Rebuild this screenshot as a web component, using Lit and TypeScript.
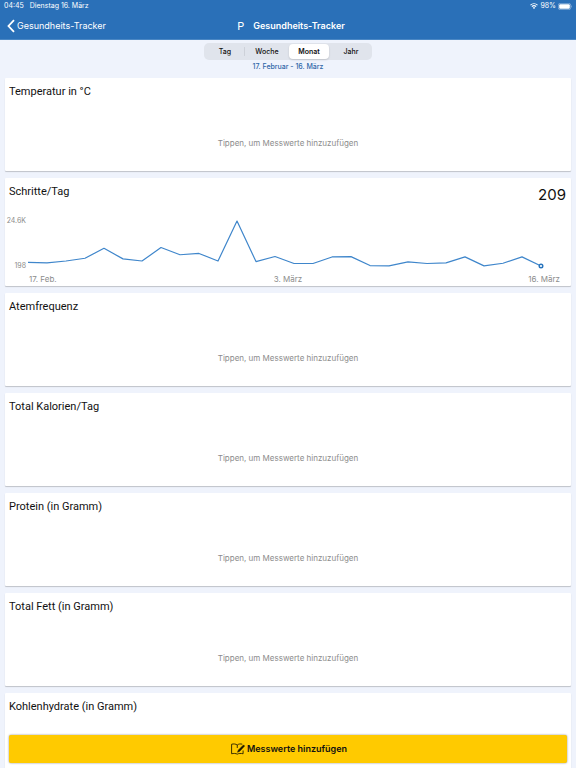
import { LitElement, html, svg, css, nothing } from "lit";
import { customElement, property, state } from "lit/decorators.js";

interface Metric {
  title: string;
  latest?: string;
  values?: number[];
  low?: string;
  high?: string;
  dates?: string[];
  pending?: boolean;
}

const METRICS: Metric[] = [
  { title: "Temperatur in °C" },
  {
    title: "Schritte/Tag",
    latest: "209",
    low: "198",
    high: "24.6K",
    dates: ["17. Feb.", "3. März", "16. März"],
    values: [
      2200, 1900, 2900, 4400, 9800, 4050, 2900, 10200, 6300, 7000, 2900, 24600, 2600, 5350,
      1550, 1550, 5100, 5300, 450, 250, 2400, 1550, 1900, 5150, 250, 1700, 5150, 209,
    ],
  },
  { title: "Atemfrequenz" },
  { title: "Total Kalorien/Tag" },
  { title: "Protein (in Gramm)" },
  { title: "Total Fett (in Gramm)" },
  { title: "Kohlenhydrate (in Gramm)", pending: true },
];

const RANGES = ["Tag", "Woche", "Monat", "Jahr"];

@customElement("line-chart")
export class LineChart extends LitElement {
  @property({ attribute: false }) values: number[] = [];

  static styles = css`
    :host { display: block; height: 45px; }
    svg { display: block; width: 100%; height: 100%; overflow: visible; }
    .line { fill: none; stroke: #3f86cb; stroke-width: 1.2; vector-effect: non-scaling-stroke; stroke-linejoin: round; }
    .dot { fill: #fff; stroke: #2874bd; stroke-width: 1.4; }
  `;

  render() {
    const min = 198;
    const max = Math.max(...this.values);
    const y = (v: number) => 100 - ((v - min) / (max - min)) * 100;
    const points = this.values
      .map((v, i) => `${(i / (this.values.length - 1)) * 100},${y(v)}`)
      .join(" ");
    const last = this.values[this.values.length - 1];
    return html`
      <svg role="img" aria-label="Verlauf">
        ${svg`
          <svg viewBox="0 0 100 100" preserveAspectRatio="none" width="100%" height="100%" overflow="visible">
            <polyline class="line" points=${points}></polyline>
          </svg>
          <circle class="dot" cx="100%" cy="${y(last)}%" r="1.8"></circle>
        `}
      </svg>
    `;
  }
}

@customElement("metric-card")
export class MetricCard extends LitElement {
  @property({ attribute: false }) metric!: Metric;

  static styles = css`
    :host {
      display: flex;
      flex-direction: column;
      flex: none;
      min-height: 93px;
      background: #fff;
      border-radius: 1px;
      box-shadow: 0 1px 1px rgba(0, 0, 0, 0.2);
    }
    header { display: flex; justify-content: space-between; height: 32px; padding: 6px 5px 0 4px; box-sizing: border-box; }
    h2 { margin: 0; font: 400 11px/16px Roboto, sans-serif; color: #111; }
    .latest { font-size: 15px; line-height: 22px; color: #111; }
    .empty {
      height: 61px;
      padding: 4px 0 0;
      border: 0;
      background: none;
      font: 400 8px/12px Inter, sans-serif;
      color: #8c8c8c;
    }
    .plot { display: grid; grid-template-columns: 20px 1fr; column-gap: 2px; padding: 11px 30px 0 1px; }
    .scale {
      display: flex;
      flex-direction: column;
      justify-content: space-between;
      margin: -4px 0;
      text-align: right;
      font-size: 7px;
      line-height: 8px;
      color: #8c8c8c;
    }
    .dates {
      display: grid;
      grid-template-columns: 1fr auto 1fr;
      padding: 8px 11px 2px;
      font-size: 8px;
      line-height: 10px;
      color: #8c8c8c;
    }
    .dates :first-child { padding-left: 13px; }
    .dates :last-child { text-align: right; }
  `;

  private renderBody(m: Metric) {
    if (m.pending) return nothing;
    if (!m.values) {
      return html`<button class="empty" type="button">Tippen, um Messwerte hinzuzufügen</button>`;
    }
    return html`
      <div class="plot">
        <div class="scale"><span>${m.high}</span><span>${m.low}</span></div>
        <line-chart .values=${m.values}></line-chart>
      </div>
      <div class="dates">${m.dates?.map((d) => html`<span>${d}</span>`)}</div>
    `;
  }

  render() {
    const m = this.metric;
    return html`
      <header>
        <h2>${m.title}</h2>
        ${m.latest ? html`<span class="latest">${m.latest}</span>` : nothing}
      </header>
      ${this.renderBody(m)}
    `;
  }
}

@customElement("app-root")
export class AppRoot extends LitElement {
  @state() private range = "Monat";

  static styles = css`
    :host {
      position: relative;
      display: flex;
      flex-direction: column;
      height: 100vh;
      overflow: hidden;
      background: #eff3fc;
      font-family: Inter, sans-serif;
    }
    .top { flex: none; background: #2a70b8; color: #fff; border-bottom: 1px solid #4a87c4; }
    .status { display: flex; align-items: center; height: 12px; padding: 0 4px; font-size: 7px; line-height: 12px; }
    .day { margin-left: 6px; flex: 1; }
    .wifi { width: 8px; height: 6px; margin-right: 2px; }
    .battery { width: 14px; height: 7px; margin-left: 2px; }
    .nav { display: grid; grid-template-columns: 1fr auto 1fr; align-items: center; height: 27px; padding: 0 7px; }
    .back { display: flex; align-items: center; gap: 2px; justify-self: start; color: #fff; text-decoration: none; font-size: 9px; line-height: 12px; }
    .back svg { width: 8px; height: 14px; }
    .heading { display: flex; align-items: center; gap: 9px; padding-left: 6px; }
    .initial { font-size: 11px; line-height: 12px; }
    h1 { margin: 0; font-size: 9px; line-height: 12px; font-weight: 600; }
    .filter { flex: none; display: flex; flex-direction: column; align-items: center; padding-top: 3px; }
    .segments {
      display: grid;
      grid-template-columns: repeat(4, 1fr);
      width: 168px;
      height: 17px;
      box-sizing: border-box;
      margin: 0;
      padding: 1px 0;
      border: 0;
      border-radius: 5px;
      background: #e0e4ec;
    }
    .segment {
      position: relative;
      display: grid;
      place-items: center;
      margin: 0 1px;
      border-radius: 4px;
      font-size: 7px;
      line-height: 15px;
      font-weight: 500;
      color: #111;
    }
    .segment input { position: absolute; inset: 0; margin: 0; opacity: 0; }
    .segment.divided { background: linear-gradient(#cdd1d9, #cdd1d9) right center / 1px 9px no-repeat; }
    .segment.selected { background: #fff; font-weight: 600; box-shadow: 0 1px 2px rgba(0, 0, 0, 0.15); }
    .period { margin: 0; padding: 1px 0 5px; font-size: 7px; line-height: 12px; font-weight: 500; color: #2f68a8; }
    main { flex: 1; min-height: 0; display: flex; flex-direction: column; gap: 7px; padding: 0 5px; overflow: hidden; }
    .add {
      position: absolute;
      left: 9px;
      right: 9px;
      bottom: 5px;
      height: 28px;
      display: flex;
      align-items: center;
      justify-content: center;
      gap: 2px;
      padding: 0 0 0 2px;
      border: 0;
      border-radius: 2px;
      background: #ffca00;
      box-shadow: 0 0 2px rgba(0, 0, 0, 0.5);
      color: #111;
      font: 600 9px/12px Inter, sans-serif;
    }
    .add svg { width: 14px; height: 12px; }
  `;

  render() {
    return html`
      <div class="top">
        <div class="status">
          <span>04:45</span><span class="day">Dienstag 16. März</span>
          <svg class="wifi" viewBox="0 0 16 12" fill="none" stroke="#fff" stroke-width="2.2" aria-hidden="true">
            <path d="M1 4.4C5 .6 11 .6 15 4.4M3.7 7.2c2.5-2.3 6.1-2.3 8.6 0" />
            <path d="M8 11.8 5.5 9.3c1.5-1.3 3.5-1.3 5 0z" fill="#fff" stroke="none" />
          </svg>
          <span>98%</span>
          <svg class="battery" viewBox="0 0 28 14" aria-hidden="true">
            <rect x=".7" y=".7" width="24.6" height="12.6" rx="3.5" fill="none" stroke="#9dbde0" stroke-width="1.3" />
            <rect x="2.4" y="2.4" width="21.2" height="9.2" rx="2" fill="#fff" />
            <path d="M26.5 4.7c1.6.8 1.6 3.8 0 4.6z" fill="#9dbde0" />
          </svg>
        </div>
        <nav class="nav">
          <a class="back" href="#">
            <svg viewBox="0 0 8 14" fill="none" stroke="#fff" stroke-width="1.8" aria-hidden="true">
              <path d="M7 1.2 1.5 7 7 12.8" />
            </svg>
            Gesundheits-Tracker
          </a>
          <div class="heading"><span class="initial">P</span><h1>Gesundheits-Tracker</h1></div>
        </nav>
      </div>
      <div class="filter">
        <fieldset class="segments" aria-label="Zeitraum">
          ${RANGES.map(
            (r, i) => html`
              <label class="segment ${r === this.range ? "selected" : i === 0 ? "divided" : ""}">
                <input type="radio" name="range" .checked=${r === this.range} @change=${() => (this.range = r)} />
                ${r}
              </label>
            `
          )}
        </fieldset>
        <p class="period">17. Februar - 16. März</p>
      </div>
      <main>${METRICS.map((m) => html`<metric-card .metric=${m}></metric-card>`)}</main>
      <button class="add" type="button">
        <svg viewBox="0 0 28 24" fill="none" stroke="#1a1600" stroke-width="1.7" stroke-linejoin="round" aria-hidden="true">
          <path d="M12.5 4C10 1.800 5 1.400 1.200 2.500v19c4-1 8.500-.8 11.300.8 2.500-1.600 7.500-1.800 11.700-.8V15M12.500 4C15 1.800 19 1.400 22.500 2.400M12.500 4V10" />
          <path d="M25 3.800 27.200 6 17.500 16.500l-4.500 2 1.800-4.500z" fill="#1a1600" stroke-width="1" />
        </svg>
        Messwerte hinzufügen
      </button>
    `;
  }
}
